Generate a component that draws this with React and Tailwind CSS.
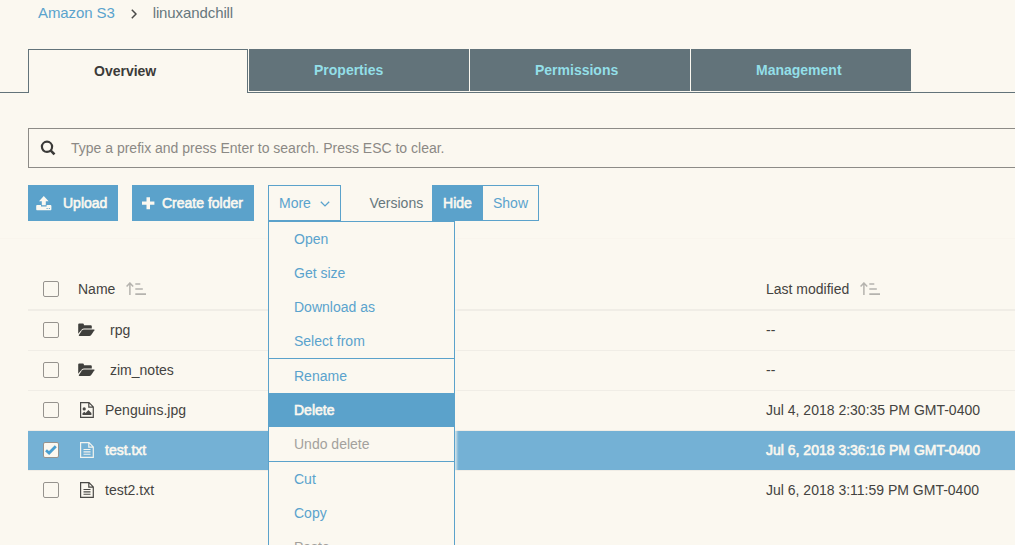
import React from "react";

const emphasis = "[-webkit-text-stroke:0.6px_currentColor]";

function SearchIcon() {
  return (
    <svg width="16" height="16" viewBox="0 0 16 16" fill="none" stroke="#3a3a38">
      <circle cx="7" cy="6.8" r="5.1" strokeWidth="2.2" />
      <path d="M10.8 10.6L14.5 14.3" strokeWidth="2.6" />
    </svg>
  );
}

function UploadIcon() {
  return (
    <svg width="16" height="15" viewBox="0 0 16 15" fill="#fbf8f0">
      <path d="M7.8 0L12.6 5.2H9.8V9.2H5.8V5.2H3Z" />
      <path fillRule="evenodd" d="M0.8 9H5V10.6H10.6V9H14.8L15.4 9.8V13.5L14.9 14.2H0.7L0.2 13.5V9.8ZM10.6 12V13H11.6V12ZM12.8 12V13H13.8V12Z" />
    </svg>
  );
}

function PlusIcon() {
  return (
    <svg width="13" height="13" viewBox="0 0 13 13" fill="#fbf8f0">
      <path d="M4.5 0.2H8V4.4H12.4V7.8H8V12.2H4.5V7.8H0V4.4H4.5Z" />
    </svg>
  );
}

function SortIcon() {
  return (
    <svg width="21" height="14" viewBox="0 0 21 14" fill="none" stroke="#b5b3ae">
      <path d="M3.9 13V1.4M0.6 4.4L3.9 1L7.2 4.4" strokeWidth="1.5" />
      <path d="M9.3 2H14.3M9.3 7H16.8M9.3 12.1H20" strokeWidth="1.7" />
    </svg>
  );
}

function FolderIcon() {
  return (
    <svg width="17" height="14" viewBox="0 0 17 14" fill="#3f3f3c">
      <path d="M0.2 10.8V1.6Q0.2 0.5 1.3 0.5H4.8Q5.9 0.5 5.9 1.6V2.2H12.7Q13.8 2.2 13.8 3.3V5.4H6Q4.8 5.4 4 6.3Z" />
      <path d="M5.7 6.4H16Q16.9 6.4 16.4 7.2L13.2 11.9Q12.5 12.9 11.3 12.9H1.3Q0.4 12.9 0.9 12.1L4.1 7.3Q4.8 6.4 5.7 6.4Z" />
    </svg>
  );
}

function FileIcon({ image, light }) {
  const color = light ? "#f2f4ef" : "#4a4946";
  return (
    <svg width="14" height="16" viewBox="0 0 14 16" fill="none" stroke={color}>
      <path d="M0.6 0.6H9L13.3 4.9V15.4H0.6ZM8.8 0.8V5.1H13.2" strokeWidth="1.2" />
      {image ? (
        <g fill={color} stroke="none">
          <circle cx="4.2" cy="6.9" r="1.6" />
          <path d="M2.5 13V11.3L4.3 9.7L5.6 10.9L8.4 7.9L11.4 11V13Z" />
        </g>
      ) : (
        <path d="M3.5 7.5H10.5M3.5 9.9H10.5M3.5 12.3H10.5" strokeWidth="1.1" />
      )}
    </svg>
  );
}

function Checkbox({ checked }) {
  return (
    <span className="flex size-4 items-center justify-center rounded-[2px] border border-[#96938e] bg-[#fbf8f0]">
      {checked && (
        <svg width="12" height="10" viewBox="0 0 12 10" fill="none" stroke="#4a9fd0" strokeWidth="2.8">
          <path d="M1 5.2L4.1 8L10.8 1.2" />
        </svg>
      )}
    </span>
  );
}

function Tab({ children }) {
  return (
    <div className="mr-px flex h-[42px] w-[220px] items-center bg-[#62737a] pl-[65px] font-bold text-[#93dfe8]">
      {children}
    </div>
  );
}

function MenuItem({ children, state }) {
  const tone =
    state === "active"
      ? "bg-[#5ba2cb] text-[#fbf8f0] [-webkit-text-stroke:0.6px_currentColor]"
      : state === "disabled"
        ? "text-[#a3a19d]"
        : "text-[#5aa3cd]";
  return <div className={`flex h-[34px] items-center pl-[25px] ${tone}`}>{children}</div>;
}

const rows = [
  { name: "rpg", type: "folder", date: "--" },
  { name: "zim_notes", type: "folder", date: "--" },
  { name: "Penguins.jpg", type: "image", date: "Jul 4, 2018 2:30:35 PM GMT-0400" },
  { name: "test.txt", type: "file", date: "Jul 6, 2018 3:36:16 PM GMT-0400", selected: true },
  { name: "test2.txt", type: "file", date: "Jul 6, 2018 3:11:59 PM GMT-0400" },
];

export default function App() {
  return (
    <div className="h-[545px] w-[1015px] overflow-hidden bg-[#fbf8f0] font-['Liberation_Sans',Arial,sans-serif] text-[14px] leading-5 text-[#444340]">
      <nav className="flex h-[49px] items-start pt-[3px] pl-[38px] text-[15px] tracking-[-0.1px]">
        <span className="text-[#5aa3cd]">Amazon S3</span>
        <svg className="mt-[6px] ml-[16px]" width="6" height="10" viewBox="0 0 6 10" fill="none" stroke="#4a4a48" strokeWidth="1.5">
          <path d="M0.8 0.8L5 5L0.8 9.2" />
        </svg>
        <span className="ml-[16px] text-[#66777d]">linuxandchill</span>
      </nav>

      <div className="flex h-11">
        <div className="w-7 border-b border-[#62737a]" />
        <div className="flex w-[220px] items-center border-x border-t border-[#62737a] pb-[2px] pl-[65px] font-bold text-[#3c3b39]">
          Overview
        </div>
        <div className="flex flex-1 border-b border-[#62737a] pl-px">
          <Tab>Properties</Tab>
          <Tab>Permissions</Tab>
          <Tab>Management</Tab>
        </div>
      </div>

      <div className="mt-[35px] ml-7 flex h-10 items-center border-y border-l border-[#8d8b87] pl-[11px]">
        <SearchIcon />
        <span className="ml-[15px] text-[#8b8985]">Type a prefix and press Enter to search. Press ESC to clear.</span>
      </div>

      <div className="mt-[17px] ml-7 flex h-9 items-center">
        <div className={`flex h-9 w-[90px] items-center bg-[#5ba2cb] pl-2 text-[#fbf8f0] ${emphasis}`}>
          <UploadIcon />
          <span className="ml-[11px]">Upload</span>
        </div>
        <div className={`ml-[14px] flex h-9 w-[122px] items-center bg-[#5ba2cb] pl-[10px] text-[#fbf8f0] ${emphasis}`}>
          <PlusIcon />
          <span className="ml-[7px] whitespace-nowrap">Create folder</span>
        </div>
        <div className="relative z-10 ml-[14px]">
          <div className="flex h-9 w-[73px] items-center border border-[#5ba2cb] pl-[10px] text-[#5aa3cd]">
            More
            <svg className="mt-[1px] ml-[9px]" width="10" height="6" viewBox="0 0 10 6" fill="none" stroke="#5aa3cd" strokeWidth="1.3">
              <path d="M0.8 0.7L5 4.9L9.2 0.7" />
            </svg>
          </div>
          <div className="absolute top-9 left-0 w-[187px] border border-[#5ba2cb] bg-[#fbf8f0] shadow-[2px_2px_2px_rgba(251,248,240,0.7)]">
            <MenuItem>Open</MenuItem>
            <MenuItem>Get size</MenuItem>
            <MenuItem>Download as</MenuItem>
            <MenuItem>Select from</MenuItem>
            <div className="h-px bg-[#5ba2cb]" />
            <MenuItem>Rename</MenuItem>
            <MenuItem state="active">Delete</MenuItem>
            <MenuItem state="disabled">Undo delete</MenuItem>
            <div className="h-px bg-[#5ba2cb]" />
            <MenuItem>Cut</MenuItem>
            <MenuItem>Copy</MenuItem>
            <MenuItem state="disabled">Paste</MenuItem>
          </div>
        </div>
        <span className="ml-[28.5px] w-[62.5px] text-[#66777d]">Versions</span>
        <div className={`flex h-9 w-[51px] items-center justify-center bg-[#5ba2cb] text-[#fbf8f0] ${emphasis}`}>Hide</div>
        <div className="flex h-9 w-14 items-center justify-center border-y border-r border-[#5ba2cb] text-[#5aa3cd]">Show</div>
      </div>

      <div className="mt-[17px] h-px bg-[#f9f5ed]" />

      <div className="mt-[29px] ml-7">
        <div className="flex h-[43px] items-center border-b-2 border-[#f0ede6] pl-[15px]">
          <Checkbox />
          <div className="ml-[19px] flex w-[688px] items-center">
            Name
            <span className="ml-[11px]"><SortIcon /></span>
          </div>
          Last modified
          <span className="ml-[11px]"><SortIcon /></span>
        </div>
        {rows.map((row) => (
          <div
            key={row.name}
            className={`flex h-10 items-center border-b border-[#f0ede6] pb-px pl-[15px] last:border-transparent ${
              row.selected ? "bg-[#74b1d5] text-[#fbf8f0] [-webkit-text-stroke:0.6px_currentColor]" : ""
            }`}
          >
            <Checkbox checked={row.selected} />
            <div className="ml-[19px] flex w-[688px] items-center">
              {row.type === "folder" ? (
                <span className="w-8"><FolderIcon /></span>
              ) : (
                <span className="w-[27px] pl-[2px]">
                  <FileIcon image={row.type === "image"} light={row.selected} />
                </span>
              )}
              {row.name}
            </div>
            {row.date}
          </div>
        ))}
      </div>
    </div>
  );
}
